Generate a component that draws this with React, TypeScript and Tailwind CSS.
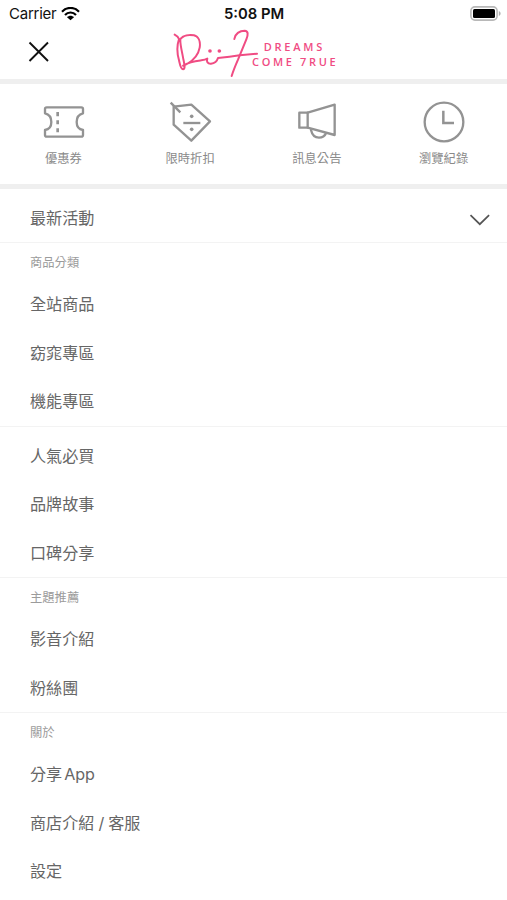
import type { ReactNode } from "react";

type MenuSection = {
  title?: string;
  items: string[];
  className?: string;
};

const sections: MenuSection[] = [
  { title: "商品分類", items: ["全站商品", "窈窕專區", "機能專區"] },
  { items: ["人氣必買", "品牌故事", "口碑分享"] },
  { title: "主題推薦", items: ["影音介紹", "粉絲團"] },
  {
    title: "關於",
    items: ["分享 App", "商店介紹 / 客服", "設定"],
    className: "[word-spacing:-0.500px] [&_li:first-child]:[word-spacing:-2px] [&_li:first-child]:tracking-[-0.150px]",
  },
];

function StatusBar() {
  return (
    <div className="grid h-[27px] grid-cols-3 items-center text-[15px] text-[#111]">
      <div className="flex items-center gap-[5px] pl-[9px] tracking-[-0.25px]">
        <span className="pt-px">Carrier</span>
        <svg width="19" height="14" viewBox="0 0 57 42" fill="none" stroke="#000" strokeWidth="6.500">
          <path d="M3 14C17 -1 40 -1 54 14" />
          <path d="M12 24C21 14 36 14 45 24" />
          <path d="M28.500 40L18 31C24 25 33 25 39 31Z" fill="#000" stroke="none" />
        </svg>
      </div>
      <div className="pt-px pl-px text-center text-[14.800px] font-semibold">5:08 PM</div>
      <div className="flex justify-end pr-[5px]">
        <svg width="32" height="15" viewBox="0 0 32 15">
          <rect x="0.900" y="0.900" width="26.200" height="13.200" rx="4" fill="#fff" stroke="#b8b8b8" strokeWidth="1.600" />
          <rect x="3" y="3" width="22" height="9" rx="1.500" fill="#000" />
          <path d="M28.800 5v5c2.400-1 2.400-4 0-5z" fill="#b0b0b0" />
        </svg>
      </div>
    </div>
  );
}

function Logo() {
  return (
    <svg width="180" height="52" viewBox="0 81 540 156" fill="none">
      <g stroke="#f04c83" strokeWidth="6" strokeLinecap="round" strokeLinejoin="round">
        <path d="M29 104C35 107 40 111 42 117C36 135 36 160 42 181C45 194 47 208 54 208C63 207 57 188 54 172C49 145 43 124 47 116C55 107 72 103 87 106C101 110 107 125 104 143C100 165 84 182 66 192C55 198 51 199 57 195C75 185 94 183 109 181C117 180 122 179 127 176C124 185 128 192 138 191C149 190 156 184 159 174C180 172 205 169 224 166L276 161" />
        <path d="M208 117C210 101 224 92 239 92C250 93 250 103 244 118L219 179C212 195 204 215 200 228" />
      </g>
      <circle cx="135" cy="153" r="5.500" fill="#f04c83" />
      <circle cx="163" cy="153" r="5.500" fill="#f04c83" />
      <g fill="#f04c83" fontFamily="'Open Sans', sans-serif" fontSize="33" fontWeight="600">
        <text x="296" y="154" textLength="176">DREAMS</text>
        <text x="261" y="197" textLength="251" xmlSpace="preserve">COME 7RUE</text>
      </g>
    </svg>
  );
}

function Header() {
  return (
    <header className="flex h-[52px] items-start">
      <button className="flex w-[165px] pt-[14px] pl-[28px]" aria-label="close">
        <svg width="22" height="22" viewBox="0 0 22 22" fill="none" stroke="#111" strokeWidth="1.900">
          <path d="M1.500 1.500L20 20M20 1.500L1.500 20" />
        </svg>
      </button>
      <Logo />
    </header>
  );
}

function Shortcut({ label, children }: { label: string; children: ReactNode }) {
  return (
    <button className="flex flex-1 flex-col items-center pt-[14px]">
      <svg
        width="48"
        height="48"
        viewBox="0 -2 144 144"
        fill="none"
        stroke="#939393"
        strokeWidth="7"
        strokeLinecap="round"
        strokeLinejoin="round"
      >
        {children}
      </svg>
      <span className="mt-[4px] text-[12.300px] leading-[18px] text-[#8a8a8a]">{label}</span>
    </button>
  );
}

function Shortcuts() {
  return (
    <div className="flex h-[100px]">
      <Shortcut label="優惠券">
        <path d="M23 26H127Q132 26 132 31V44C119 47 113 58 113 70C113 82 119 92 132 94V109Q132 114 127 114H23Q18 114 18 109V94C31 92 37 82 37 70C37 58 31 47 18 44V31Q18 26 23 26Z" />
        <path d="M56 40V53M56 65V77M56 89V101" strokeLinecap="butt" strokeWidth="8" />
      </Shortcut>
      <Shortcut label="限時折扣">
        <path d="M23 24L76 18L132 68L76 126L23 78Z" />
        <path d="M14 12L43 41" strokeLinecap="butt" />
        <path d="M52 73H103" strokeLinecap="butt" />
        <circle cx="77" cy="53" r="5.500" fill="#939393" stroke="none" />
        <circle cx="77" cy="92" r="5.500" fill="#939393" stroke="none" />
      </Shortcut>
      <Shortcut label="訊息公告">
        <path d="M19 42H44V87H19Z" />
        <path d="M44 42L125 18V109L44 87" />
        <path d="M54 94C57 107 66 117 78 117C88 117 96 111 99 104" />
      </Shortcut>
      <Shortcut label="瀏覽紀錄">
        <circle cx="72" cy="70" r="58" />
        <path d="M70 36V73H102" strokeLinecap="butt" strokeLinejoin="miter" strokeWidth="7.500" />
      </Shortcut>
    </div>
  );
}

function Section({ title, items, className = "" }: MenuSection) {
  return (
    <section className={`border-b border-[#f3f3f3] last:border-0 ${className}`}>
      {title ? (
        <h2 className="flex h-[37px] items-center pt-[3px] pl-[30px] text-[12.300px] text-[#9b9b9b]">{title}</h2>
      ) : (
        <div className="h-[5px]" />
      )}
      <ul>
        {items.map((item) => (
          <li key={item} className="flex h-[48.500px] items-center pl-[30px] text-[16.100px] text-[#666]">
            {item}
          </li>
        ))}
      </ul>
    </section>
  );
}

export default function App() {
  return (
    <div className="h-[900px] w-[507px] overflow-hidden bg-white font-[Inter,'Noto_Sans_CJK_TC',sans-serif]">
      <StatusBar />
      <Header />
      <div className="h-[5px] bg-[#efefef]" />
      <Shortcuts />
      <div className="h-[5px] bg-[#efefef]" />
      <div className="flex h-[54px] items-center justify-between border-b border-[#f3f3f3] pr-[17px] pb-px pl-[30px] text-[16.100px] text-[#666]">
        <span className="pt-[6px]">最新活動</span>
        <svg className="mt-[9px]" width="21" height="12" viewBox="0 0 21 12" fill="none" stroke="#555" strokeWidth="1.700">
          <path d="M1.500 1.200L10.800 10.200L20.100 1.200" />
        </svg>
      </div>
      {sections.map((section, i) => (
        <Section key={i} {...section} />
      ))}
    </div>
  );
}
